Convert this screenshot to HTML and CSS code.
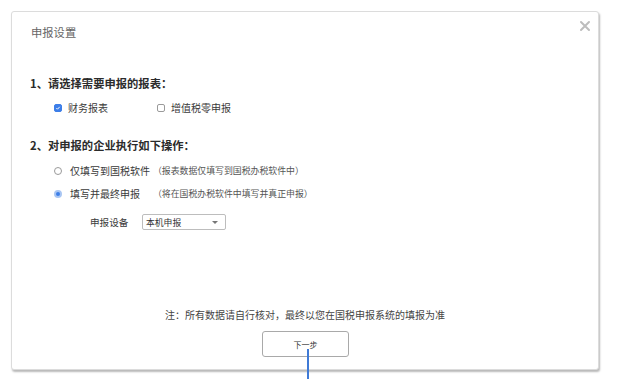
FILE: index.html
```html
<!DOCTYPE html>
<html lang="zh-CN">
<head>
<meta charset="utf-8">
<title>申报设置</title>
<link rel="stylesheet" href="styles.css">
</head>
<body>
<div class="dialog">
  <div class="header">
    <div class="title">申报设置</div>
    <svg class="close" width="12" height="12" viewBox="0 0 12 12"><path d="M2 2L10 10M10 2L2 10" stroke="#bdbdbd" stroke-width="2" stroke-linecap="round"/></svg>
  </div>
  <div class="body">
    <div class="heading h1">1、请选择需要申报的报表：</div>
    <div class="checks">
      <div class="check"><span class="box on"><svg width="8" height="8" viewBox="0 0 8 8"><path d="M1.8 4.1L3.3 5.6L6.3 2.4" fill="none" stroke="#fff" stroke-width="1.3"/></svg></span>财务报表</div>
      <div class="check"><span class="box"></span>增值税零申报</div>
    </div>
    <div class="heading h2">2、对申报的企业执行如下操作：</div>
    <div class="radio r1"><span class="dot"></span><span class="label">仅填写到国税软件</span><span class="hint">（报表数据仅填写到国税办税软件中）</span></div>
    <div class="radio r2"><span class="dot on"></span><span class="label">填写并最终申报</span><span class="hint">（将在国税办税软件中填写并真正申报）</span></div>
    <div class="device"><span class="dlabel">申报设备</span><div class="select"><span>本机申报</span><span class="caret"></span></div></div>
    <div class="note">注：所有数据请自行核对，最终以您在国税申报系统的填报为准</div>
    <div class="actions"><div class="btn">下一步</div></div>
  </div>
</div>
<div class="cursor"></div>
</body>
</html>
```
FILE: styles.css
```css
html, body { margin: 0; padding: 0; background: #fff; }
body {
  width: 619px; height: 379px; overflow: hidden; position: relative;
  font-family: "Noto Sans CJK SC", "Noto Sans", sans-serif;
  color: #333;
}
.dialog {
  box-sizing: border-box;
  margin: 11px 0 0 11px;
  width: 588px; height: 359px;
  border: 1px solid #dcdcdc;
  border-radius: 3px;
  box-shadow: 1px 2px 2px rgba(0,0,0,0.28);
  background: #fff;
  display: flex; flex-direction: column;
}
.header {
  height: 42px;
  display: flex; justify-content: space-between; align-items: flex-start;
  padding: 0 7px 0 19px;
}
.title {
  margin-top: 12px;
  font-size: 11.3px; line-height: 16px; color: #666;
}
.close { margin-top: 8px; }
.body { display: flex; flex-direction: column; padding-left: 18px; }
.heading { font-size: 11.3px; line-height: 16px; font-weight: bold; color: #2b2b2b; }
.h1 { margin-top: 21px; }
.h2 { margin-top: 22px; }
.checks { margin-top: 10px; padding-left: 24px; display: flex; gap: 49px; }
.check { display: flex; align-items: center; font-size: 10px; line-height: 14px; color: #3a3a3a; }
.box {
  box-sizing: border-box; width: 8px; height: 8px; margin-right: 6px;
  border: 1px solid #9a9a9a; border-radius: 2px; background: #fff;
  display: flex; align-items: center; justify-content: center;
}
.box svg { display: block; }
.box.on { background: #3d7ee8; border-color: #3d7ee8; }
.radio { display: flex; align-items: center; padding-left: 24px; font-size: 10px; line-height: 14px; color: #3a3a3a; }
.r1 { margin-top: 11px; }
.r2 { margin-top: 9px; }
.dot {
  box-sizing: border-box; width: 8px; height: 8px; margin-right: 8px;
  border: 1px solid #9a9a9a; border-radius: 50%; background: #fff;
}
.dot.on { border: 2px solid #a9c6f3; background: #3d7ee8; }
.label { width: 83px; flex: none; }
.hint { font-size: 8.9px; color: #555; }
.device { margin-top: 13px; padding-left: 60px; display: flex; align-items: center; height: 16px; }
.dlabel { font-size: 9.6px; color: #3a3a3a; width: 52px; }
.select {
  box-sizing: border-box; width: 84px; height: 16px;
  border: 1px solid #bdbdbd; border-radius: 2px; background: #fff;
  display: flex; align-items: center; justify-content: space-between;
  padding: 0 7px 0 3px;
  font-size: 8.8px; color: #333;
}
.caret { width: 0; height: 0; border-left: 3px solid transparent; border-right: 3px solid transparent; border-top: 3px solid #777; }
.note { margin-top: 78px; text-align: center; font-size: 10px; line-height: 14px; color: #444; padding-right: 18px; }
.actions { margin-top: 9px; display: flex; padding-left: 232px; }
.btn {
  box-sizing: border-box; width: 87px; height: 26px;
  border: 1px solid #a9a9a9; border-radius: 3px; background: #fff;
  display: flex; align-items: center; justify-content: center;
  font-size: 8px; color: #333;
}
.cursor { position: absolute; left: 307px; top: 349px; width: 2px; height: 30px; background: #3f7ad6; }
```
